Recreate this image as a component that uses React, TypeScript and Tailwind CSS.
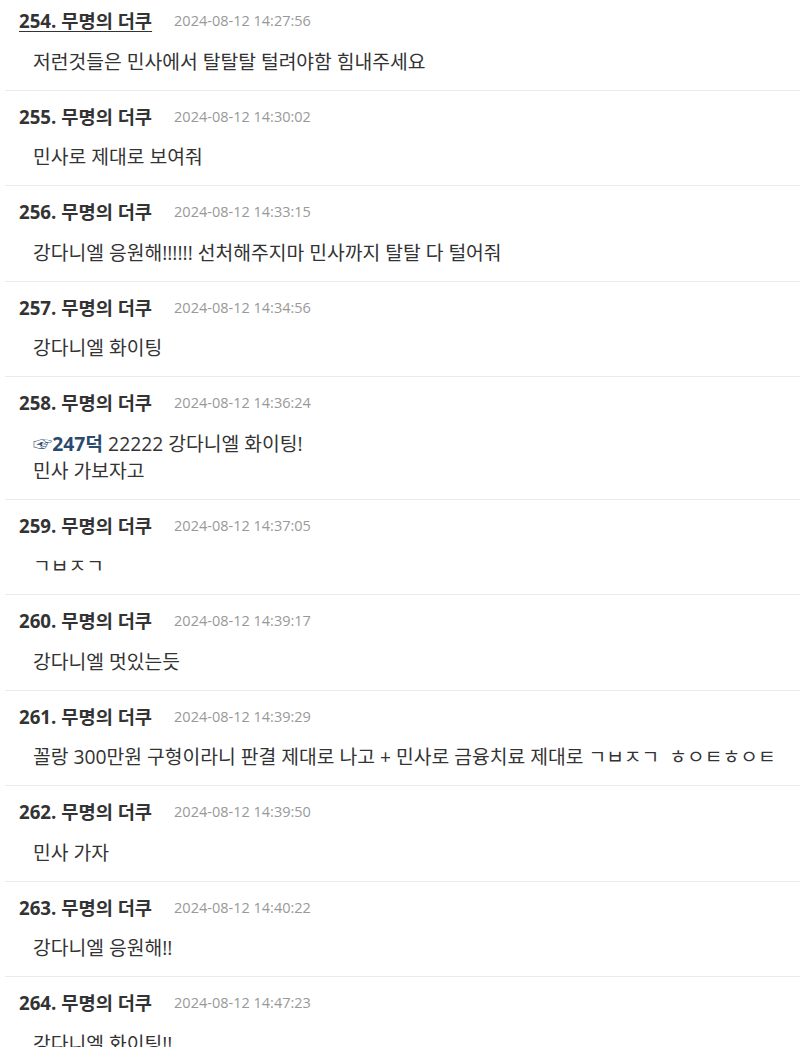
import React from "react";

type Comment = {
  no: number;
  time: string;
  body: React.ReactNode;
  active?: boolean;
};

const comments: Comment[] = [
  { no: 254, time: "2024-08-12 14:27:56", body: "저런것들은 민사에서 탈탈탈 털려야함 힘내주세요", active: true },
  { no: 255, time: "2024-08-12 14:30:02", body: "민사로 제대로 보여줘" },
  { no: 256, time: "2024-08-12 14:33:15", body: "강다니엘 응원해!!!!!! 선처해주지마 민사까지 탈탈 다 털어줘" },
  { no: 257, time: "2024-08-12 14:34:56", body: "강다니엘 화이팅" },
  {
    no: 258,
    time: "2024-08-12 14:36:24",
    body: (
      <>
        <a className="font-bold text-[#2b4a6e]">☞247덕</a> 22222 강다니엘 화이팅!
        <br />
        민사 가보자고
      </>
    ),
  },
  { no: 259, time: "2024-08-12 14:37:05", body: "ㄱㅂㅈㄱ" },
  { no: 260, time: "2024-08-12 14:39:17", body: "강다니엘 멋있는듯" },
  {
    no: 261,
    time: "2024-08-12 14:39:29",
    body: "꼴랑 300만원 구형이라니 판결 제대로 나고 + 민사로 금융치료 제대로 ㄱㅂㅈㄱ  ㅎㅇㅌㅎㅇㅌ",
  },
  { no: 262, time: "2024-08-12 14:39:50", body: "민사 가자" },
  { no: 263, time: "2024-08-12 14:40:22", body: "강다니엘 응원해!!" },
  { no: 264, time: "2024-08-12 14:47:23", body: "강다니엘 화이팅!!" },
];

function CommentItem({ c }: { c: Comment }) {
  return (
    <li className="ml-[5px] border-b border-[#ebebeb] pt-[14px] pb-[15px]">
      <div className="flex items-center pl-[14px] leading-[24px]">
        <span
          className={`text-[18.7px] font-bold text-[#333] ${c.active ? "underline underline-offset-[3px]" : ""}`}
        >
          {c.no}. 무명의 더쿠
        </span>
        <span className="ml-[22px] text-[14.5px] text-[#999]">{c.time}</span>
      </div>
      <div className="mt-[14.5px] whitespace-pre pl-[28px] text-[19.3px] leading-[27px] text-[#333]">
        {c.body}
      </div>
    </li>
  );
}

export default function App() {
  return (
    <div
      className="h-[1047px] overflow-hidden bg-white"
      style={{ fontFamily: '"Open Sans", "Noto Sans CJK KR", sans-serif' }}
    >
      <ul className="-mt-[5px]">
        {comments.map((c) => (
          <CommentItem key={c.no} c={c} />
        ))}
      </ul>
    </div>
  );
}
